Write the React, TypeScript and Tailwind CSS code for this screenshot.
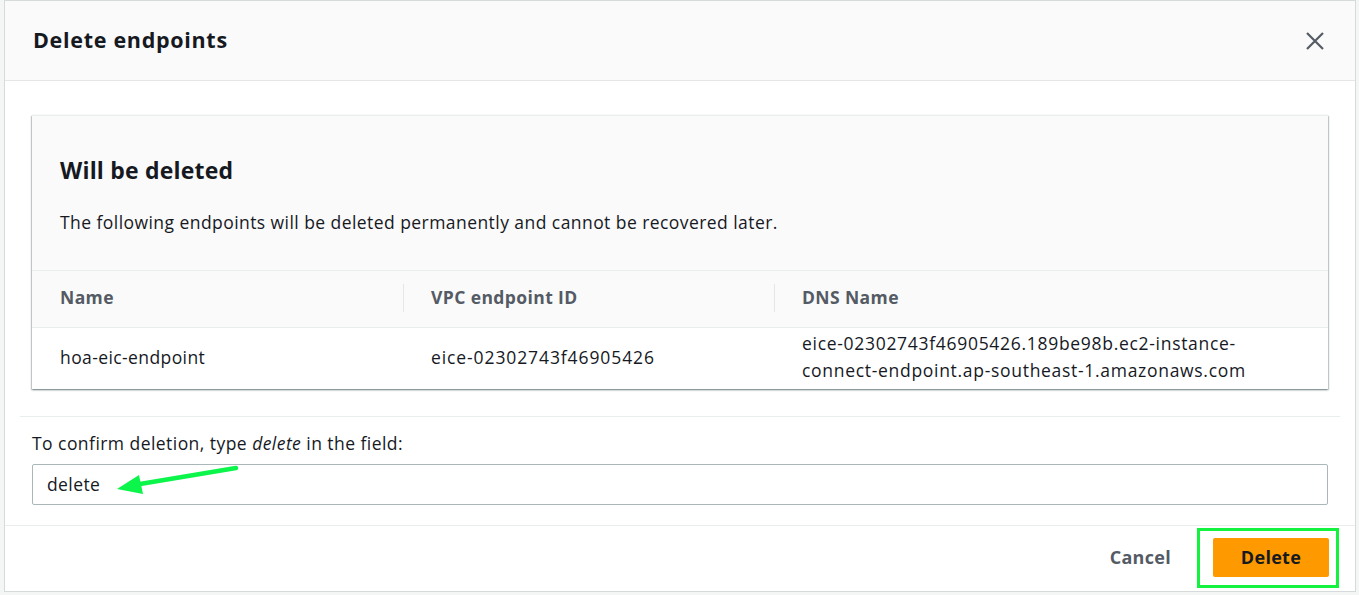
import React from "react";

export default function App() {
  const font = { fontFamily: '"Open Sans", "Noto Sans", Arial, sans-serif' };
  return (
    <div className="w-[1359px] h-[595px] bg-[#f4f5f5] overflow-hidden relative" style={font}>
      <div className="absolute left-[4px] top-0 w-[1352px] h-[592px] bg-white border border-[#d5dbdb] flex flex-col">
        {/* header */}
        <div className="h-[80px] shrink-0 bg-[#fafafa] border-b border-[#e5e7e7] flex items-center justify-between pl-[28px] pr-[30px]">
          <h1 className="text-[21.5px] font-bold text-[#16191f] tracking-[0.7px]">Delete endpoints</h1>
          <svg width="20" height="20" viewBox="0 0 20 20" className="text-[#545b64]">
            <path d="M2 2 L18 18 M18 2 L2 18" stroke="currentColor" strokeWidth="2.2" fill="none" />
          </svg>
        </div>
        {/* body */}
        <div className="flex flex-col px-[27px] pt-[34px]">
          <div className="bg-white shadow-[0_1px_2px_rgba(0,28,36,0.35),1px_1px_1px_rgba(0,28,36,0.15),-1px_1px_1px_rgba(0,28,36,0.15)] border-t border-[#eaeded] flex flex-col">
            <div className="h-[155px] bg-[#fafafa] border-b border-[#eaeded] px-[28px] pt-[36px]">
              <h2 className="text-[23px] font-bold text-[#16191f] leading-[36px] tracking-[0.2px]">Will be deleted</h2>
              <p className="mt-[22px] text-[17.5px] text-[#16191f] leading-[24px] tracking-[0.44px]">
                The following endpoints will be deleted permanently and cannot be recovered later.
              </p>
            </div>
            <div className="h-[57px] bg-[#fafafa] border-b border-[#eaeded] flex items-center pb-[3px] text-[17.5px] font-bold text-[#545b64] tracking-[0.4px]">
              <div className="w-[371px] pl-[28px]">Name</div>
              <div className="w-[1px] h-[28px] bg-[#e5e7e7]" />
              <div className="w-[370px] pl-[27px]">VPC endpoint ID</div>
              <div className="w-[1px] h-[28px] bg-[#e5e7e7]" />
              <div className="flex-1 pl-[27px]">DNS Name</div>
            </div>
            <div className="h-[61px] flex items-center pb-[3px] text-[17.5px] text-[#16191f]">
              <div className="w-[371px] pl-[28px] tracking-[0.4px]">hoa-eic-endpoint</div>
              <div className="w-[371px] pl-[28px] tracking-[0.9px]">eice-02302743f46905426</div>
              <div className="flex-1 pl-[28px] leading-[27px] tracking-[0.7px]">
                <div>eice-02302743f46905426.189be98b.ec2-instance-</div>
                <div>connect-endpoint.ap-southeast-1.amazonaws.com</div>
              </div>
            </div>
          </div>
          <div className="mt-[27px] -mx-[12px] h-px bg-[#eaeded]" />
          <label className="mt-[14px] text-[17.5px] text-[#16191f] leading-[24px] tracking-[0.45px]">
            To confirm deletion, type <i>delete</i> in the field:
          </label>
          <div className="relative mt-[9px] h-[41px] border border-[#aab7b8] rounded-[2px] flex items-center pl-[14px] text-[17.5px] text-[#16191f] tracking-[0.4px]">
            delete
            <svg className="absolute left-[47px] top-[-3px]" width="165" height="32" viewBox="80 462 165 32">
              <line x1="236" y1="468" x2="134" y2="485" stroke="#0bf54b" strokeWidth="4.5" strokeLinecap="round" />
              <polygon points="117,489 139,475 143,494" fill="#0bf54b" />
            </svg>
          </div>
        </div>
        <div className="mt-[20px] border-t border-[#eaeded] flex-1 flex items-center justify-end pr-[26px] pb-[2px]">
          <button className="text-[18px] font-bold text-[#545b64] tracking-[0.3px] mr-[42px]">Cancel</button>
          <div className="relative">
            <div className="absolute -left-[16px] -top-[10px] -right-[10px] -bottom-[11px] border-[3px] border-[#12f23e]" />
            <button className="w-[116px] h-[39px] bg-[#ff9900] rounded-[2px] text-[18px] font-bold text-[#16191f] tracking-[0.3px]">Delete</button>
          </div>
        </div>
      </div>
    </div>
  );
}
